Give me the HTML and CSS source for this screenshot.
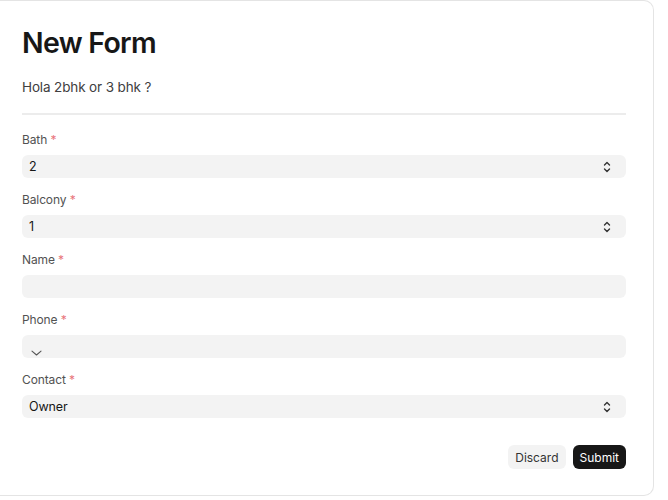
FILE: index.html
```html
<!DOCTYPE html>
<html lang="en">
<head>
    <meta charset="UTF-8">
    <meta name="viewport" content="width=device-width, initial-scale=1.0">
    <title>New Form</title>
    <link rel="stylesheet" href="styles.css">
</head>
<body>
    <div class="form-card">
        <h1 class="form-title">New Form</h1>
        <p class="form-intro">Hola 2bhk or 3 bhk ?</p>
        <hr class="form-divider">

        <div class="field">
            <label class="field-label">Bath <span class="req">*</span></label>
            <div class="control select-control">
                <select class="input">
                    <option>2</option>
                    <option>3</option>
                </select>
                <svg class="select-icon" width="12" height="14" viewBox="0 0 12 14" fill="none" stroke="#333" stroke-width="1.4" stroke-linecap="round" stroke-linejoin="round"><path d="M3.5 5 6 2.5 8.5 5"/><path d="M3.5 9 6 11.5 8.5 9"/></svg>
            </div>
        </div>

        <div class="field">
            <label class="field-label">Balcony <span class="req">*</span></label>
            <div class="control select-control">
                <select class="input">
                    <option>1</option>
                    <option>2</option>
                </select>
                <svg class="select-icon" width="12" height="14" viewBox="0 0 12 14" fill="none" stroke="#333" stroke-width="1.4" stroke-linecap="round" stroke-linejoin="round"><path d="M3.5 5 6 2.5 8.5 5"/><path d="M3.5 9 6 11.5 8.5 9"/></svg>
            </div>
        </div>

        <div class="field">
            <label class="field-label">Name <span class="req">*</span></label>
            <div class="control">
                <input class="input" type="text">
            </div>
        </div>

        <div class="field">
            <label class="field-label">Phone <span class="req">*</span></label>
            <div class="control phone-control">
                <input class="input" type="tel">
                <svg class="phone-icon" width="11" height="6" viewBox="0 0 11 6" fill="none" stroke="#555" stroke-width="1.1" stroke-linecap="round" stroke-linejoin="round"><path d="M1 1.2 5.5 5 10 1.2"/></svg>
            </div>
        </div>

        <div class="field">
            <label class="field-label">Contact <span class="req">*</span></label>
            <div class="control select-control">
                <select class="input">
                    <option>Owner</option>
                    <option>Agent</option>
                </select>
                <svg class="select-icon" width="12" height="14" viewBox="0 0 12 14" fill="none" stroke="#333" stroke-width="1.4" stroke-linecap="round" stroke-linejoin="round"><path d="M3.5 5 6 2.5 8.5 5"/><path d="M3.5 9 6 11.5 8.5 9"/></svg>
            </div>
        </div>

        <div class="form-actions">
            <button class="btn btn-subtle">Discard</button>
            <button class="btn btn-solid">Submit</button>
        </div>
    </div>
</body>
</html>
```

FILE: styles.css
```css
:root {
  --text-dark: #171717;
  --text-muted: #525252;
  --input-bg: #f3f3f3;
  --line: #e4e4e4;
  --req: #e8747a;
}

body {
  margin: 0;
  background: #ffffff;
  color: var(--text-dark);
  font-family: "Inter", "Liberation Sans", sans-serif;
}

.form-card {
  width: 604px;
  margin: 0 0 0 -1px;
  padding: 24px 27px 26px 22px;
  background: #ffffff;
  border: 1px solid var(--line);
  border-left-color: transparent;
  border-radius: 0 10px 10px 0;
}

.form-title {
  margin: 0;
  font-size: 28.5px;
  line-height: 36px;
  font-weight: 600;
  letter-spacing: -0.025em;
  color: var(--text-dark);
}

.form-intro {
  margin: 16px 0 0;
  font-size: 13.5px;
  line-height: 20px;
  letter-spacing: -0.01em;
  color: #404040;
}

.form-divider {
  margin: 16px 0 16px;
  border: 0;
  height: 2px;
  background: #ececec;
}

.field {
  display: flex;
  flex-direction: column;
  gap: 7px;
  margin-bottom: 13px;
}

.field-label {
  padding-top: 1px;
  font-size: 12px;
  line-height: 16px;
  letter-spacing: -0.01em;
  color: var(--text-muted);
}

.req {
  color: var(--req);
}

.control {
  position: relative;
}

.input {
  display: block;
  box-sizing: border-box;
  width: 100%;
  height: 23px;
  margin: 0;
  padding: 0 7px;
  border: 0;
  border-radius: 6px;
  background: var(--input-bg);
  font-family: inherit;
  font-size: 12.5px;
  letter-spacing: -0.01em;
  color: var(--text-dark);
  outline: none;
  appearance: none;
  -webkit-appearance: none;
}

.select-icon {
  position: absolute;
  right: 13px;
  top: 5px;
  pointer-events: none;
}

.phone-icon {
  position: absolute;
  left: 9px;
  bottom: 2px;
  pointer-events: none;
}

.form-actions {
  display: flex;
  justify-content: flex-end;
  gap: 7px;
  margin-top: 27px;
}

.btn {
  height: 24px;
  padding: 0 7px;
  border: 0;
  border-radius: 6px;
  font-family: inherit;
  font-size: 12px;
  cursor: pointer;
}

.btn-subtle {
  background: var(--input-bg);
  color: #333333;
}

.btn-solid {
  background: #171717;
  color: #ffffff;
}
```
